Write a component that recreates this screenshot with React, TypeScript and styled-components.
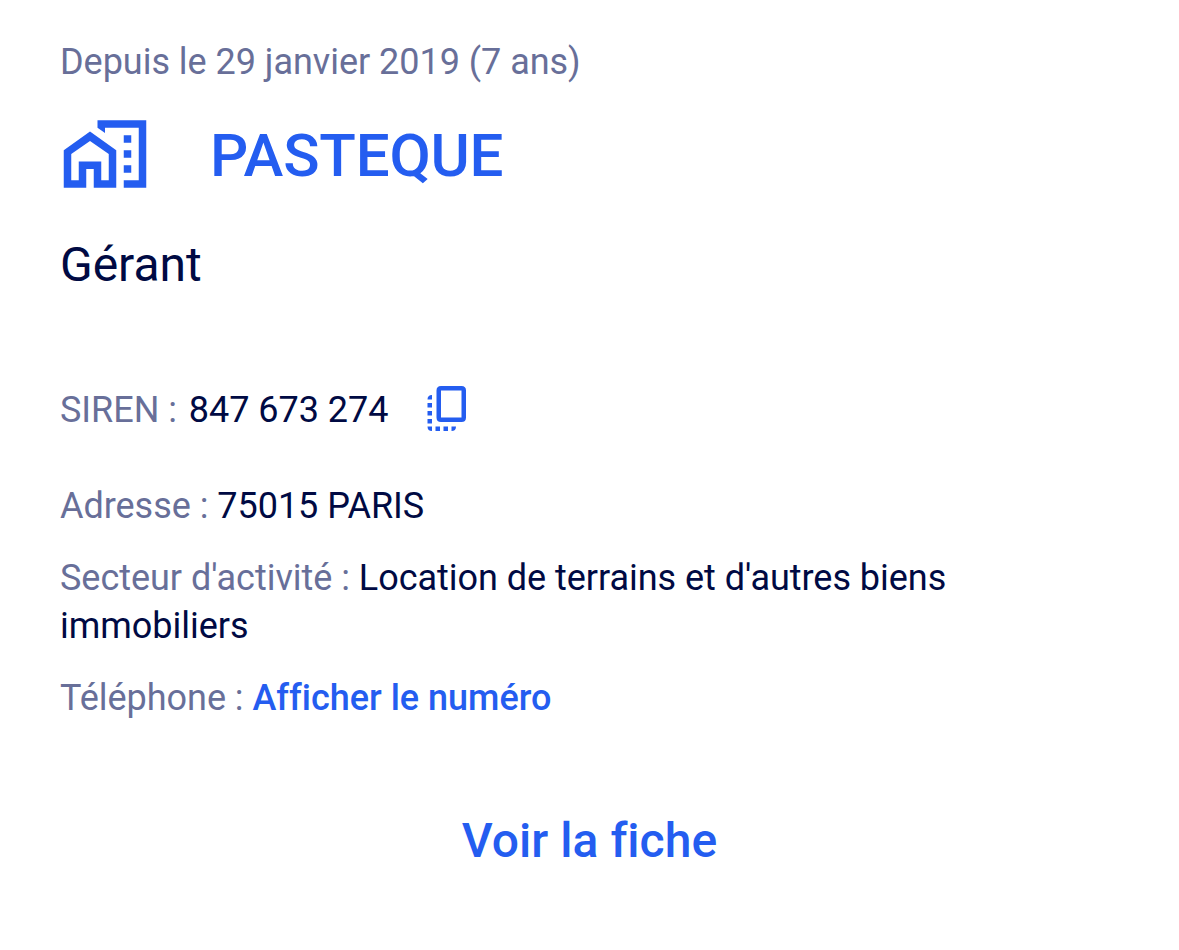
import styled, { createGlobalStyle } from 'styled-components';

const GlobalStyle = createGlobalStyle`
  body {
    margin: 0;
    background: #fff;
    font-family: Roboto, sans-serif;
    font-variant-ligatures: none;
  }
`;

const Card = styled.article`
  box-sizing: border-box;
  height: 950px;
  padding: 38px 60px 0;
  font-size: 36px;
  letter-spacing: -0.03px;
  line-height: 48px;
  color: #000a43;
`;

const Period = styled.p`
  margin: 0;
  color: #686f99;
`;

const Header = styled.header`
  display: flex;
  align-items: center;
  gap: 60px;
  height: 72px;
  margin-top: 32px;
  color: #245df0;
`;

const CompanyIcon = styled.svg`
  width: 90px;
  height: 90px;
  fill: currentColor;
`;

const CompanyName = styled.h2`
  margin: 3px 0 0;
  font-size: 60px;
  font-weight: 500;
  letter-spacing: -0.2px;
  line-height: 72px;
`;

const Role = styled.p`
  margin: 43px 0 0;
  font-size: 48px;
  line-height: 64px;
`;

const Details = styled.dl`
  margin: 0;
`;

const Row = styled.div<{ $top: number }>`
  width: 960px;
  margin-top: ${({ $top }) => $top}px;
`;

const Label = styled.dt`
  display: inline;
  color: #686f99;
`;

const Value = styled.dd<{ $gap?: number }>`
  display: inline;
  margin: 0 0 0 ${({ $gap = 0 }) => $gap}px;
`;

const CopyButton = styled.button`
  display: inline-flex;
  margin: 0 0 0 36px;
  padding: 0;
  border: 0;
  background: none;
  color: #245df0;
  vertical-align: top;
`;

const CopyIcon = styled.svg`
  width: 48px;
  height: 48px;
  fill: currentColor;
`;

const PhoneLink = styled.a`
  font-weight: 500;
  letter-spacing: 0;
  color: #245df0;
`;

const Footer = styled.footer`
  display: flex;
  justify-content: center;
  margin-top: 87px;
`;

const ProfileLink = styled.a`
  font-size: 48px;
  font-weight: 500;
  letter-spacing: 0.03px;
  line-height: 64px;
  color: #245df0;
`;

export default function App() {
  return (
    <>
      <GlobalStyle />
      <Card>
        <Period>Depuis le 29 janvier 2019 (7 ans)</Period>
        <Header>
          <CompanyIcon viewBox="0 0 24 24">
            <path d="M1 11v10h6v-5h2v5h6V11L8 6l-7 5zm12 8h-2v-5H5v5H3v-7l5-3.5 5 3.5v7z" />
            <path d="M17 7h2v2h-2zM17 11h2v2h-2zM17 15h2v2h-2z" />
            <path d="M10 3v1.97l2 1.43V5h9v14h-4v2h6V3z" />
          </CompanyIcon>
          <CompanyName>PASTEQUE</CompanyName>
        </Header>
        <Role>Gérant</Role>
        <Details>
          <Row $top={89}>
            <Label>SIREN : </Label>
            <Value $gap={3}>847 673 274</Value>
            <CopyButton type="button" aria-label="Copier">
              <CopyIcon viewBox="0 0 48 48">
                <path
                  fillRule="evenodd"
                  d="M17 0H37.5Q42 0 42 4.5V31.5Q42 36 37.5 36H17Q12.5 36 12.5 31.5V4.5Q12.5 0 17 0ZM17 4.5V31.5H37.5V4.5Z"
                />
                <path d="M8 9v4.5H3.5Q3.5 9 8 9zM3.500 17H8v4.500H3.500zM3.500 25H8v4.500H3.500zM3.500 33H8v4.500H3.500zM3.500 40.500H8V45Q3.500 45 3.500 40.500zM11.500 40.500H16V45h-4.500zM19.500 40.500H24V45h-4.500zM27.500 40.500H32Q32 45 27.500 45z" />
              </CopyIcon>
            </CopyButton>
          </Row>
          <Row $top={48}>
            <Label>Adresse : </Label>
            <Value>75015 PARIS</Value>
          </Row>
          <Row $top={24}>
            <Label>Secteur d'activité : </Label>
            <Value>Location de terrains et d'autres biens immobiliers</Value>
          </Row>
          <Row $top={24}>
            <Label>Téléphone : </Label>
            <Value>
              <PhoneLink>Afficher le numéro</PhoneLink>
            </Value>
          </Row>
        </Details>
        <Footer>
          <ProfileLink>Voir la fiche</ProfileLink>
        </Footer>
      </Card>
    </>
  );
}
